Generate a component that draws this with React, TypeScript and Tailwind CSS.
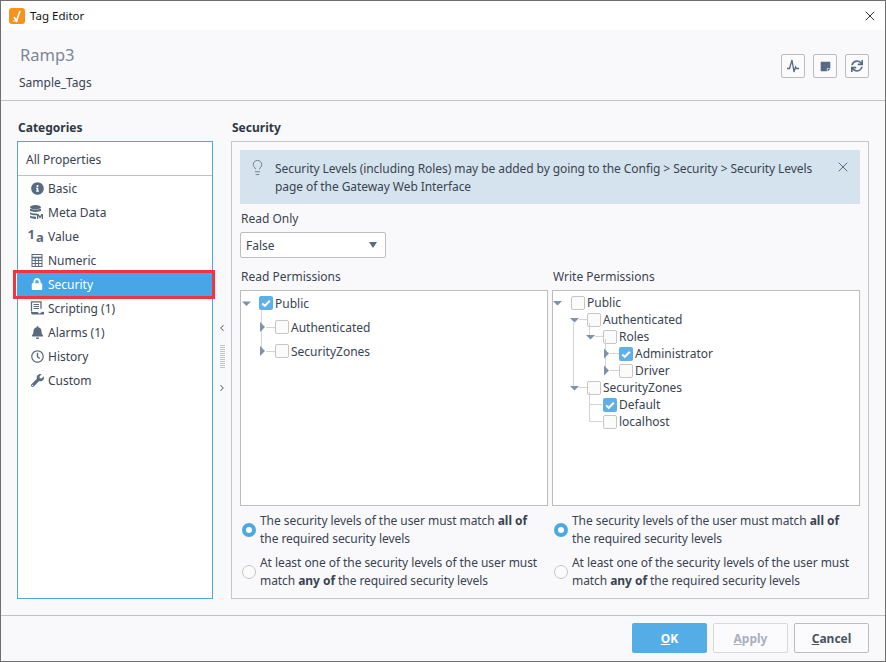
import { ChevronLeft, ChevronRight, Lightbulb, X } from "lucide-react";
import { FaBell, FaInfoCircle, FaLock, FaRegClock, FaStickyNote, FaSync, FaWrench } from "react-icons/fa";

const font = { fontFamily: '"Noto Sans", sans-serif' };

function MetaIcon() {
  return (
    <svg viewBox="0 0 14 14" className="w-[14px] h-[14px]" fill="#5b6b7f">
      <ellipse cx="5.500" cy="2.200" rx="5.500" ry="2.200" />
      <path d="M0 3.600c1 1.500 10 1.500 11 0v2.200c-1 1.500-10 1.500-11 0zM0 7.200c1 1.200 5 1.500 7 1.200v1.800c-2 .3-6 0-7-1.200zM0 10.600c1 .8 3 1.200 6 1.200V14c-3 0-5-.6-6-1.400z" />
      <path d="M7 14V9h1.600l1.400 2.200L11.400 9H13v5h-1.300v-3l-1.700 2.400L8.300 11v3z" />
    </svg>
  );
}

function ValueIcon() {
  return (
    <span className="flex items-end w-[16px] h-[14px] text-[#5b6b7f] font-bold leading-none -ml-[3px]">
      <span className="text-[13px] -mt-[1px] self-start leading-[12px]">1</span>
      <span className="text-[13px] ml-[1px] leading-[12px]">a</span>
    </span>
  );
}

function CalcIcon() {
  return (
    <svg viewBox="0 0 12 13" className="w-[12px] h-[13px]" fill="none" stroke="#5b6b7f">
      <rect x="1" y=".5" width="10" height="12" />
      <path d="M1 3.500h10" strokeWidth="1.600" />
      <path d="M1 6.500h10M1 9.500h10M4.300 3.500v9M7.600 3.500v9" />
    </svg>
  );
}

function ScriptIcon() {
  return (
    <svg viewBox="0 0 14 14" className="w-[14px] h-[14px]" fill="none" stroke="#5b6b7f">
      <path d="M1.500 10.500V.8h9.500v7" strokeWidth="1.300" />
      <path d="M3.500 3.500h5.500M3.500 5.500h5.500M3.500 7.500h5.500" strokeWidth="1" />
      <path d="M1 11h7c.5 2 2 2 3 .5 1-.8 2-.8 3-.5v2.500H2.500C1.500 13.500 1 12.500 1 11z" fill="#5b6b7f" stroke="none" />
    </svg>
  );
}

const categories = [
  { name: "Basic", icon: <FaInfoCircle size={13} color="#5b6b7f" /> },
  { name: "Meta Data", icon: <MetaIcon /> },
  { name: "Value", icon: <ValueIcon /> },
  { name: "Numeric", icon: <CalcIcon /> },
  { name: "Security", icon: <FaLock size={12} color="#ffffff" />, active: true },
  { name: "Scripting (1)", icon: <ScriptIcon /> },
  { name: "Alarms (1)", icon: <FaBell size={13} color="#5b6b7f" /> },
  { name: "History", icon: <FaRegClock size={13} color="#5b6b7f" /> },
  { name: "Custom", icon: <FaWrench size={13} color="#5b6b7f" /> },
];

const readTree = [
  { label: "Public", level: 0, checked: true },
  { label: "Authenticated", level: 1 },
  { label: "SecurityZones", level: 1 },
];

const writeTree = [
  { label: "Public", level: 0 },
  { label: "Authenticated", level: 1 },
  { label: "Roles", level: 2 },
  { label: "Administrator", level: 3, checked: true },
  { label: "Driver", level: 3 },
  { label: "SecurityZones", level: 1 },
  { label: "Default", level: 2, checked: true },
  { label: "localhost", level: 2 },
];

function Checkbox({ checked }: { checked?: boolean }) {
  if (checked) {
    return (
      <span className="flex items-center justify-center w-[14px] h-[14px] shrink-0 rounded-[2px] bg-[#5fb0e8]">
        <svg viewBox="0 0 14 14" className="w-[14px] h-[14px]" fill="none" stroke="#fff" strokeWidth="2">
          <path d="M3.200 7.400l2.600 2.400 5-5" />
        </svg>
      </span>
    );
  }
  return <span className="w-[14px] h-[14px] shrink-0 rounded-[2px] border border-[#c6c6c6] bg-[#fbfbfb]" />;
}

function Tree({
  rows,
  boxClass,
  rowClass,
  labelClass,
  lines,
}: {
  rows: typeof writeTree;
  boxClass: string;
  rowClass: string;
  labelClass: string;
  lines: React.ReactNode;
}) {
  return (
    <div className={"relative flex-1 h-[216px] border border-[#bdbdbd] bg-white pl-[18px] " + boxClass}>
      {lines}
      {rows.map((r) => (
        <div key={r.label} className={"flex items-center gap-[2px] " + rowClass} style={{ paddingLeft: r.level * 16 }}>
          <Checkbox checked={r.checked} />
          <span className={labelClass}>{r.label}</span>
        </div>
      ))}
    </div>
  );
}

function ReadLines() {
  return (
    <svg className="absolute left-0 top-0 pointer-events-none" width="60" height="80">
      <path d="M20.500 19v42M25 36.500h9M25 60.500h9" stroke="#d4d4d4" fill="none" />
      <path d="M1 10.500h9l-4.500 4.500z" fill="#7f92a8" />
      <path d="M19 31l5 5-5 5zM19 55l5 5-5 5z" fill="#7f92a8" />
    </svg>
  );
}

function WriteLines() {
  return (
    <svg className="absolute left-0 top-0 pointer-events-none" width="80" height="140">
      <path d="M20.500 32v64M36.500 32v13M52.500 48v31M36.500 101v29.500" stroke="#d4d4d4" fill="none" />
      <path d="M26 28.500h8M26 96.500h8M42 45.500h8M36.500 113.500h13M36.500 130.500h13M57 62.500h9M57 79.500h9" stroke="#d4d4d4" fill="none" />
      <path d="M0 10h9l-4.500 4.500zM17 27h9l-4.500 4.500zM33 44h9l-4.500 4.500zM17 95h9l-4.500 4.500z" fill="#7f92a8" />
      <path d="M51 57.500l5 5-5 5zM51 74.500l5 5-5 5z" fill="#7f92a8" />
    </svg>
  );
}

function Radio({ checked }: { checked?: boolean }) {
  if (checked) {
    return <span className="w-[14px] h-[14px] shrink-0 rounded-full border-[4px] border-[#4ea8e6] bg-white" />;
  }
  return <span className="w-[14px] h-[14px] shrink-0 rounded-full border border-[#c6c6c6] bg-[#fbfbfb]" />;
}

function RadioGroup() {
  return (
    <div className="flex-1 flex flex-col gap-[6px] pl-[2px] pr-[6px] tracking-[-0.06px]">
      <div className="flex items-center gap-[4px]">
        <Radio checked />
        <p className="leading-[18px]">
          The security levels of the user must match <b>all of</b> the required security levels
        </p>
      </div>
      <div className="flex items-center gap-[4px]">
        <Radio />
        <p className="leading-[18px]">
          At least one of the security levels of the user must match <b>any of</b> the required security levels
        </p>
      </div>
    </div>
  );
}

function ToolButton({ children }: { children: React.ReactNode }) {
  return (
    <button className="flex items-center justify-center w-[24px] h-[24px] border border-[#bcbcbc] rounded-[2px] bg-[#fbfbfd]">
      {children}
    </button>
  );
}

export default function App() {
  return (
    <div
      style={font}
      className="flex flex-col w-[886px] h-[662px] border border-[#6e6e6e] bg-[#f9f9fc] text-[12px] text-[#3a4350] overflow-hidden"
    >
      <div className="flex items-center h-[29px] shrink-0 bg-white pl-[8px] pr-[7px] text-[#111]">
        <span className="flex items-center justify-center w-[16px] h-[16px] rounded-[3px] bg-[#f6931e]">
          <svg viewBox="0 0 16 16" className="w-[16px] h-[16px]" fill="none" stroke="#fff">
            <path d="M5 9l2.500 4L11 3" strokeWidth="1.600" />
            <path d="M4 13h5" strokeWidth="1" />
          </svg>
        </span>
        <span className="ml-[5px] mt-[1px] text-[11.5px]">Tag Editor</span>
        <X className="ml-auto" size={16} strokeWidth={1.300} color="#111" />
      </div>

      <div className="flex justify-between h-[71px] shrink-0 border-b border-[#c2c2c2] pl-[18px] pr-[16px]">
        <div>
          <div className="mt-[13px] ml-[1px] text-[16.5px] leading-[24px] text-[#7b8697]">Ramp3</div>
          <div className="mt-[7px] leading-[18px]">Sample_Tags</div>
        </div>
        <div className="flex gap-[8px] mt-[24px]">
          <ToolButton>
            <svg viewBox="0 0 14 14" className="w-[14px] h-[14px]" fill="none" stroke="#566a84" strokeWidth="1.300">
              <path d="M1 9.500h2.500l2.500-8.500 2 12 1.500-5 1 1.500H13" />
            </svg>
          </ToolButton>
          <ToolButton>
            <FaStickyNote size={11} color="#566a84" />
          </ToolButton>
          <ToolButton>
            <FaSync size={12} color="#566a84" />
          </ToolButton>
        </div>
      </div>

      <div className="flex flex-1 min-h-0 border-b border-[#c2c2c2] pl-[16px] pr-[16px] pb-[16px]">
        <div className="flex flex-col w-[196px] shrink-0">
          <div className="h-[40px] pt-[18px] pl-[1px] font-bold leading-[18px] text-[#2f3844]">Categories</div>
          <div className="relative flex-1 border border-[#4ea8e6] bg-white">
            <div className="flex items-center h-[34px] border-b border-[#c2c2c2] pl-[8px] pt-[2px]">All Properties</div>
            {categories.map((c) => (
              <div key={c.name} className="relative">
                <div className={"flex items-center h-[24px] pl-[12px] " + (c.active ? "bg-[#46a6e6] text-white" : "")}>
                  <span className="flex items-center justify-center w-[14px] shrink-0">{c.icon}</span>
                  <span className="ml-[4px] mt-[1px]">{c.name}</span>
                </div>
                {c.active && (
                  <span className="absolute -left-[5px] -right-[3px] -top-[2px] -bottom-[3px] border-[3px] border-[#f0353f]" />
                )}
              </div>
            ))}
          </div>
        </div>

        <div className="flex flex-col items-center w-[18px] shrink-0 pt-[222px] text-[#5b6b7f]">
          <ChevronLeft size={10} strokeWidth={2.500} />
          <div className="mt-[12px] w-[5px] h-[24px] bg-[repeating-linear-gradient(to_bottom,#c4c4c4_0,#c4c4c4_1px,transparent_1px,transparent_2px)]" />
          <div className="mt-[14px]">
            <ChevronRight size={10} strokeWidth={2.500} />
          </div>
        </div>

        <div className="flex flex-col flex-1 min-w-0">
          <div className="h-[40px] pt-[18px] pl-[1px] font-bold leading-[18px] text-[#2f3844]">Security</div>
          <div className="flex flex-col flex-1 border border-[#c6c6c6] px-[8px] pt-[8px]">
            <div className="flex items-start h-[54px] bg-[#d5e3ee] pl-[9px] pr-[9px] pt-[9px]">
              <Lightbulb size={17} strokeWidth={1.400} color="#6d7f92" className="shrink-0" />
              <p className="ml-[9px] mt-[1px] leading-[18px] w-[555px] tracking-[-0.07px]">
                Security Levels (including Roles) may be added by going to the Config &gt; Security &gt; Security Levels
                page of the Gateway Web Interface
              </p>
              <X size={16} strokeWidth={1.500} color="#5b6b7f" className="ml-auto shrink-0" />
            </div>

            <div className="pl-[1px] mt-[6px] leading-[18px]">Read Only</div>
            <div className="flex items-center justify-between w-[146px] h-[26px] mt-[4px] border border-[#bdbdbd] rounded-[2px] bg-white pl-[5px] pr-[5px]">
              <span className="mt-[1px]">False</span>
              <svg width="12" height="6" viewBox="0 0 12 6" className="mr-[1px]" fill="#5b6b7f">
                <path d="M2 0h8L6 6z" />
              </svg>
            </div>

            <div className="flex gap-[4px] mt-[10px] leading-[18px]">
              <div className="flex-1 pl-[1px]">Read Permissions</div>
              <div className="flex-1 pl-[1px]">Write Permissions</div>
            </div>
            <div className="flex gap-[4px] mt-[4px]">
              <Tree rows={readTree} boxClass="pt-0" rowClass="h-[24px]" labelClass="mt-[1px]" lines={<ReadLines />} />
              <Tree rows={writeTree} boxClass="pt-[3px]" rowClass="h-[17px]" labelClass="" lines={<WriteLines />} />
            </div>
            <div className="flex gap-[4px] mt-[5px] pt-[1px]">
              <RadioGroup />
              <RadioGroup />
            </div>
          </div>
        </div>
      </div>

      <div className="flex justify-end gap-[6px] h-[45px] shrink-0 pt-[7px] pr-[16px] font-bold">
        <button className="w-[75px] h-[30px] pt-[1px] rounded-[2px] bg-[#55ade8] text-white">
          <u>O</u>K
        </button>
        <button className="w-[75px] h-[30px] pt-[1px] rounded-[2px] border border-[#d8d8d8] bg-[#fbfbfd] text-[#a9b1bc]">
          <u>A</u>pply
        </button>
        <button className="w-[75px] h-[30px] pt-[1px] rounded-[2px] border border-[#bcbcbc] bg-[#fbfbfd] text-[#4a5360]">
          <u>C</u>ancel
        </button>
      </div>
    </div>
  );
}
